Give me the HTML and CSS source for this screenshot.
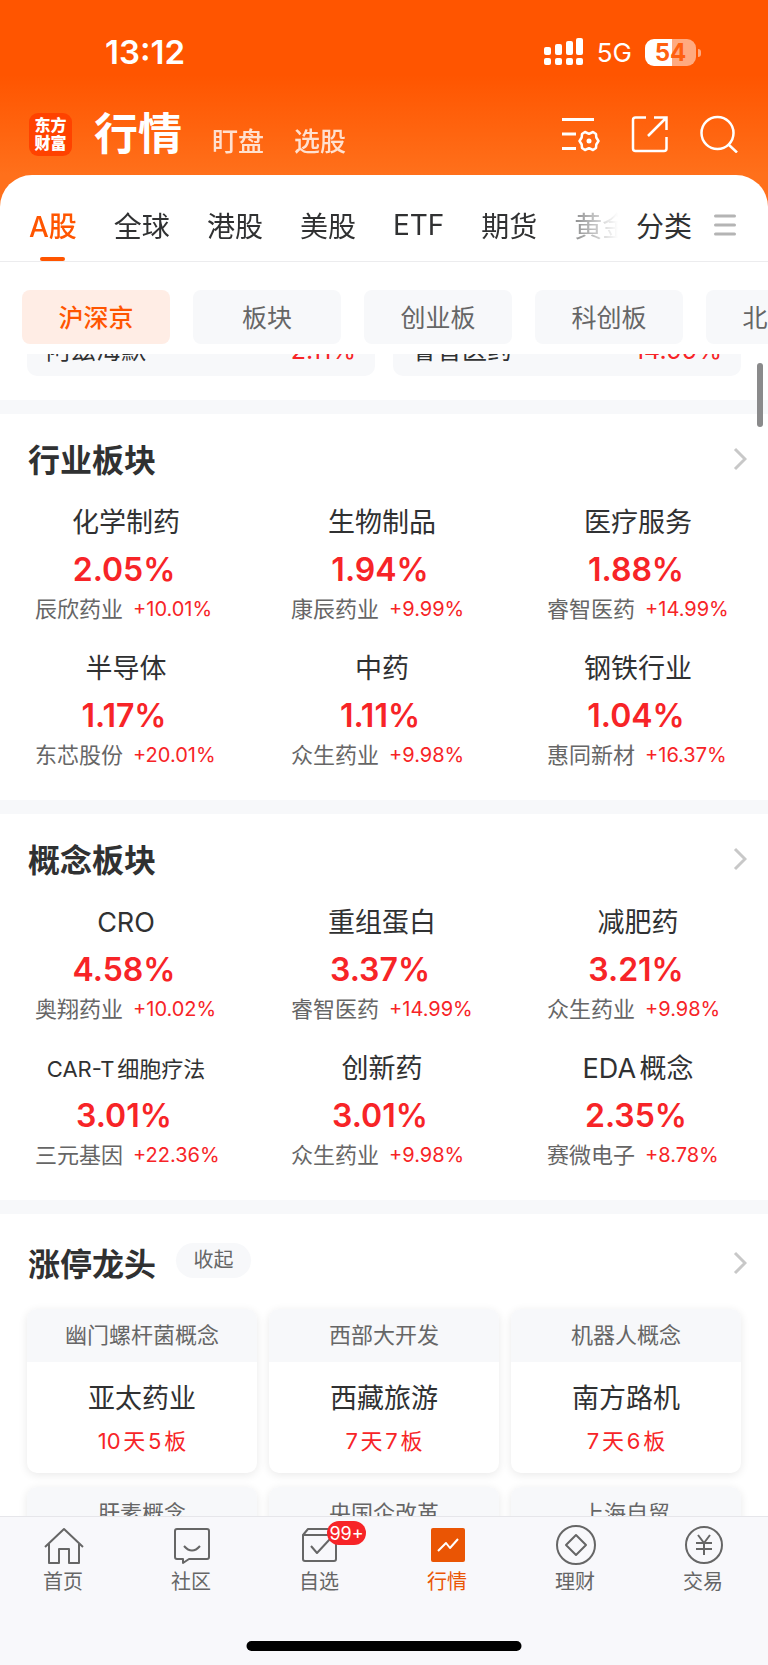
FILE: index.html
```html
<!DOCTYPE html>
<html lang="zh-CN">
<head>
  <meta charset="UTF-8" />
  <meta name="viewport" content="width=device-width, initial-scale=1.0" />
  <title>行情</title>
  <link rel="stylesheet" href="styles.css">
</head>
<body>
  <div class="status">
    <span class="time">13:12</span>
    <div class="status-right">
      <svg width="40" height="28" viewBox="0 0 40 28" fill="#fff">
        <rect x="0" y="9" width="7" height="8" rx="2"/><rect x="11" y="6" width="7" height="11" rx="2"/>
        <rect x="22" y="3" width="7" height="14" rx="2"/><rect x="32" y="0" width="7" height="17" rx="2"/>
        <rect x="0" y="20" width="7" height="7" rx="2"/><rect x="11" y="20" width="7" height="7" rx="2"/>
        <rect x="22" y="20" width="7" height="7" rx="2"/><rect x="32" y="20" width="7" height="7" rx="2"/>
      </svg>
      <span class="network">5G</span>
      <span class="battery">54</span>
    </div>
  </div>

  <header class="head">
    <div class="logo">东方<br>财富</div>
    <div class="head-tabs">
      <h1>行情</h1>
      <button>盯盘</button>
      <button>选股</button>
    </div>
    <div class="head-icons">
      <button aria-label="设置">
        <svg width="38" height="38" viewBox="0 0 38 38" fill="none" stroke="#fff" stroke-width="3">
          <path d="M0 4.500H32M0 19H14M0 33.500H14"/>
          <path stroke-width="2.500" stroke-linejoin="round" d="M23 17L27 18.800L31 17L34 19L34.300 22.500L36.500 26L34.300 29.500L34 33L31 35L27 33.200L23 35L20 33L19.700 29.500L17.500 26L19.700 22.500L20 19Z"/>
          <circle cx="27" cy="26" r="2.500" fill="#fff" stroke="none"/>
        </svg>
      </button>
      <button aria-label="分享">
        <svg width="38" height="38" viewBox="0 0 38 38" fill="none" stroke="#fff" stroke-width="2.500">
          <path d="M15 2.500H4.500Q2 2.500 2 5V33.500Q2 36 4.500 36H33Q35.500 36 35.500 33.500V22"/>
          <path d="M23 2.500H35.500V15M35 3L17 21"/>
        </svg>
      </button>
      <button aria-label="搜索">
        <svg width="38" height="38" viewBox="0 0 38 38" fill="none" stroke="#fff" stroke-width="2.500">
          <circle cx="17.500" cy="18" r="16"/><path d="M28.500 29.500L37 37.500"/>
        </svg>
      </button>
    </div>
  </header>

  <div class="panel">
    <div class="markets">
      <div class="market-list">
        <button class="active">A股</button>
        <button>全球</button>
        <button>港股</button>
        <button>美股</button>
        <button>ETF</button>
        <button>期货</button>
        <button>黄金</button>
      </div>
      <button class="category">分类
        <svg width="22" height="22" viewBox="0 0 22 22" stroke="#b4b4b4" stroke-width="3" stroke-linecap="round"><path d="M1.500 2H20.500M1.500 11H20.500M1.500 20H20.500"/></svg>
      </button>
    </div>

    <div class="chips">
      <button class="active">沪深京</button>
      <button>板块</button>
      <button>创业板</button>
      <button>科创板</button>
      <button>北交所</button>
    </div>

    <main>
      <div class="scrollbar"></div>
      <div class="quotes">
        <div class="quote"><span>阿兹海默</span><span class="up">2.11%</span></div>
        <div class="quote"><span>睿智医药</span><span class="up">14.99%</span></div>
      </div>

      <section>
        <div class="title">
          <h2>行业板块</h2>
          <button class="more" aria-label="更多"><svg width="14" height="24" viewBox="0 0 14 24" fill="none" stroke="#c8c8c8" stroke-width="3"><path d="M2 2L12 12L2 22"/></svg></button>
        </div>
        <div class="sectors">
          <div class="sector"><h3>化学制药</h3><strong>2.05%</strong><p>辰欣药业<em>+10.01%</em></p></div>
          <div class="sector"><h3>生物制品</h3><strong>1.94%</strong><p>康辰药业<em>+9.99%</em></p></div>
          <div class="sector"><h3>医疗服务</h3><strong>1.88%</strong><p>睿智医药<em>+14.99%</em></p></div>
          <div class="sector"><h3>半导体</h3><strong>1.17%</strong><p>东芯股份<em>+20.01%</em></p></div>
          <div class="sector"><h3>中药</h3><strong>1.11%</strong><p>众生药业<em>+9.98%</em></p></div>
          <div class="sector"><h3>钢铁行业</h3><strong>1.04%</strong><p>惠同新材<em>+16.37%</em></p></div>
        </div>
      </section>

      <section>
        <div class="title">
          <h2>概念板块</h2>
          <button class="more" aria-label="更多"><svg width="14" height="24" viewBox="0 0 14 24" fill="none" stroke="#c8c8c8" stroke-width="3"><path d="M2 2L12 12L2 22"/></svg></button>
        </div>
        <div class="sectors">
          <div class="sector"><h3>CRO</h3><strong>4.58%</strong><p>奥翔药业<em>+10.02%</em></p></div>
          <div class="sector"><h3>重组蛋白</h3><strong>3.37%</strong><p>睿智医药<em>+14.99%</em></p></div>
          <div class="sector"><h3>减肥药</h3><strong>3.21%</strong><p>众生药业<em>+9.98%</em></p></div>
          <div class="sector"><h3 class="long">CAR-T细胞疗法</h3><strong>3.01%</strong><p>三元基因<em>+22.36%</em></p></div>
          <div class="sector"><h3>创新药</h3><strong>3.01%</strong><p>众生药业<em>+9.98%</em></p></div>
          <div class="sector"><h3>EDA概念</h3><strong>2.35%</strong><p>赛微电子<em>+8.78%</em></p></div>
        </div>
      </section>

      <section class="leaders">
        <div class="title">
          <h2>涨停龙头</h2>
          <button class="fold">收起</button>
          <button class="more" aria-label="更多"><svg width="14" height="24" viewBox="0 0 14 24" fill="none" stroke="#c8c8c8" stroke-width="3"><path d="M2 2L12 12L2 22"/></svg></button>
        </div>
        <div class="cards">
          <div class="card"><h4>幽门螺杆菌概念</h4><h3>亚太药业</h3><p>10天5板</p></div>
          <div class="card"><h4>西部大开发</h4><h3>西藏旅游</h3><p>7天7板</p></div>
          <div class="card"><h4>机器人概念</h4><h3>南方路机</h3><p>7天6板</p></div>
          <div class="card"><h4>肝素概念</h4></div>
          <div class="card"><h4>央国企改革</h4></div>
          <div class="card"><h4>上海自贸</h4></div>
        </div>
      </section>
    </main>
  </div>

  <nav class="tabbar">
    <a href="#">
      <svg width="40" height="40" viewBox="0 0 40 40"><path d="M1 20L20 2L39 20M5 17V36H15V22H25V36H35V17"/></svg>
      <span>首页</span>
    </a>
    <a href="#">
      <svg width="40" height="40" viewBox="0 0 40 40"><path d="M5 2H35Q37 2 37 4V30Q37 32 35 32H17L11 36V32H5Q3 32 3 30V4Q3 2 5 2ZM12 19Q20 28 28 19"/></svg>
      <span>社区</span>
    </a>
    <a href="#">
      <svg width="40" height="40" viewBox="0 0 40 40"><path d="M3 8V32Q3 34 5 34H34Q36 34 36 32V8M3 8L8 2H31L36 8ZM11 19L17 26L30 12"/></svg>
      <i class="badge">99+</i>
      <span>自选</span>
    </a>
    <a href="#" class="active">
      <svg width="40" height="40" viewBox="0 0 40 40"><rect x="3" y="1" width="34" height="34" rx="2" fill="#ea5504" stroke="none"/><path stroke="#fff" d="M10 24L18 16L22 21L30 12"/></svg>
      <span>行情</span>
    </a>
    <a href="#">
      <svg width="40" height="40" viewBox="0 0 40 40"><circle cx="20" cy="18" r="19"/><path d="M20 8L30 18L20 28L10 18Z"/></svg>
      <span>理财</span>
    </a>
    <a href="#">
      <svg width="40" height="40" viewBox="0 0 40 40"><circle cx="20" cy="18" r="18"/><path d="M14 8L20 16L26 8M20 16V28M12 16H28M12 22H28"/></svg>
      <span>交易</span>
    </a>
    <div class="home-bar"></div>
  </nav>
</body>
</html>
```

FILE: styles.css
```css
* { box-sizing: border-box; }
body {
  margin: 0;
  height: 100vh;
  display: flex;
  flex-direction: column;
  overflow: hidden;
  font-family: Inter, "Noto Sans CJK SC", sans-serif;
  color: #303132;
  background: linear-gradient(#ff5500 75px, #ff701b 175px);
}
h1, h2, h3, h4, p { margin: 0; font-weight: 400; }
em, i { font-style: normal; }
svg { display: block; flex: none; }
button {
  padding: 0;
  border: 0;
  background: none;
  color: inherit;
  font-family: inherit;
  white-space: nowrap;
}

/* status bar */
.status {
  flex: none;
  height: 104px;
  padding: 0 72px 0 105px;
  display: flex;
  align-items: center;
  justify-content: space-between;
  color: #fff;
}
.time { font-size: 33px; font-weight: 600; }
.status-right { display: flex; align-items: center; gap: 13px; }
.network { font-size: 26px; }
.battery {
  position: relative;
  width: 51px;
  height: 27px;
  border-radius: 9px;
  background: linear-gradient(to right, #fff 27px, rgba(255,255,255,0.5) 27px);
  color: #ff6010;
  font-size: 24px;
  font-weight: 700;
  line-height: 27px;
  text-align: center;
}
.battery::after {
  content: "";
  position: absolute;
  right: -5px;
  top: 10px;
  width: 3px;
  height: 8px;
  border-radius: 0 3px 3px 0;
  background: rgba(255,255,255,0.5);
}

/* header */
.head {
  flex: none;
  height: 71px;
  padding: 0 30px 11px 29px;
  display: flex;
  align-items: center;
  color: #fff;
}
.logo {
  width: 43px;
  height: 43px;
  padding-top: 3px;
  border-radius: 9px;
  background: #ff4200;
  font-size: 16px;
  font-weight: 900;
  line-height: 18px;
  text-align: center;
}
.head-tabs { display: flex; align-items: flex-end; gap: 30px; margin-left: 22px; }
.head-tabs h1 { font-size: 44px; font-weight: 600; line-height: 60px; }
.head-tabs button { font-size: 26px; font-weight: 500; line-height: 44px; opacity: 0.8; }
.head-icons { display: flex; gap: 31px; margin-left: auto; }

/* market tabs */
.panel {
  flex: 1;
  min-height: 0;
  display: flex;
  flex-direction: column;
  background: #fff;
  border-radius: 32px 32px 0 0;
}
.markets {
  flex: none;
  display: flex;
  height: 87px;
  padding: 14px 32px 0 0;
  border-bottom: 1px solid #ececee;
}
.market-list {
  flex: 1;
  min-width: 0;
  display: flex;
  gap: 37px;
  padding-left: 29px;
  overflow: hidden;
  -webkit-mask-image: linear-gradient(to right, #000 calc(100% - 80px), transparent);
  mask-image: linear-gradient(to right, #000 calc(100% - 80px), transparent);
}
.markets button { position: relative; flex: none; font-size: 28px; }
.market-list .active { color: #ff5500; font-weight: 500; }
.market-list .active::after {
  content: "";
  position: absolute;
  left: 50%;
  bottom: 0;
  width: 25px;
  height: 4px;
  margin-left: -13px;
  border-radius: 2px;
  background: #ff5500;
}
.markets .category { display: flex; align-items: center; gap: 22px; margin-left: 18px; }

.chips {
  flex: none;
  display: flex;
  gap: 23px;
  padding: 28px 0 10px 22px;
  overflow: hidden;
}
.chips button {
  flex: none;
  width: 148px;
  height: 54px;
  padding-bottom: 2px;
  border-radius: 8px;
  background: #f7f8fa;
  color: #666;
  font-size: 25px;
}
.chips .active { background: #ffede5; color: #ff5500; font-weight: 500; }

/* content */
main { position: relative; flex: 1; min-height: 0; overflow: hidden; }
.scrollbar {
  position: absolute;
  top: 9px;
  right: 5px;
  width: 6px;
  height: 64px;
  border-radius: 3px;
  background: #8a8a8b;
}
.quotes {
  display: flex;
  align-items: flex-end;
  gap: 18px;
  height: 22px;
  margin: 0 27px 24px;
  overflow: hidden;
}
.quote {
  flex: 1;
  display: flex;
  justify-content: space-between;
  padding: 0 19px;
  border-radius: 10px;
  background: #f7f8fa;
  font-size: 25px;
  line-height: 52px;
}
.up { color: #f72427; }

section { padding: 12px 0 30px; border-top: 14px solid #f7f8fa; }
.title { display: flex; align-items: center; height: 66px; padding: 0 21px 0 28px; }
.title h2 { padding-bottom: 3px; font-size: 32px; font-weight: 600; }
.more { margin-left: auto; }
.fold {
  width: 75px;
  height: 35px;
  margin: 0 0 5px 20px;
  border-radius: 18px;
  background: #f7f8fa;
  color: #666;
  font-size: 20px;
  line-height: 33px;
}
.sectors {
  display: grid;
  grid-template-columns: repeat(3, 1fr);
  row-gap: 22px;
  margin-top: 8px;
}
.sector { padding-right: 8px; text-align: center; }
.sector h3 { padding: 1px 0 0 4px; font-size: 27px; line-height: 44px; }
.sector .long { font-size: 22px; }
.sector strong { display: block; font-size: 32px; font-weight: 600; line-height: 49px; color: #f72427; }
.sector p {
  display: flex;
  gap: 10px;
  padding-left: 35px;
  font-size: 22px;
  line-height: 30px;
  color: #666;
  white-space: nowrap;
}
.sector em { font-size: 20px; color: #f72427; }
.sector h3, .card p { text-autospace: normal; }

.leaders { padding-top: 16px; }
.cards {
  display: grid;
  grid-template-columns: repeat(3, 1fr);
  gap: 14px 12px;
  margin: 13px 27px 0;
}
.card {
  height: 164px;
  border-radius: 10px;
  background: #fff;
  box-shadow: 0 2px 10px rgba(0,0,0,0.09);
  overflow: hidden;
  text-align: center;
}
.card h4 { background: #f7f8fa; color: #666; font-size: 22px; line-height: 53px; }
.card h3 { margin-top: 15px; font-size: 27px; line-height: 44px; }
.card p { color: #f72427; font-size: 22px; line-height: 40px; }

/* bottom bar */
.tabbar {
  position: relative;
  flex: none;
  display: flex;
  height: 149px;
  padding-top: 10px;
  border-top: 1px solid #e6e6ea;
  background: #f8f8fb;
}
.tabbar a {
  position: relative;
  flex: 1;
  display: flex;
  flex-direction: column;
  align-items: center;
  color: #666;
  font-size: 20px;
  line-height: 30px;
  text-decoration: none;
}
.tabbar span { padding-right: 2px; }
.tabbar svg { fill: none; stroke: #666; stroke-width: 2; stroke-linejoin: round; overflow: visible; }
.tabbar .active { color: #ea5504; }
.badge {
  position: absolute;
  left: 50%;
  top: -6px;
  width: 39px;
  height: 24px;
  margin-left: 7px;
  border-radius: 12px;
  background: #f72427;
  color: #fff;
  font-size: 18px;
  line-height: 25px;
  text-align: center;
}
.home-bar {
  position: absolute;
  left: 50%;
  bottom: 14px;
  width: 275px;
  height: 10px;
  border-radius: 5px;
  background: #000;
  transform: translateX(-50%);
}
```
